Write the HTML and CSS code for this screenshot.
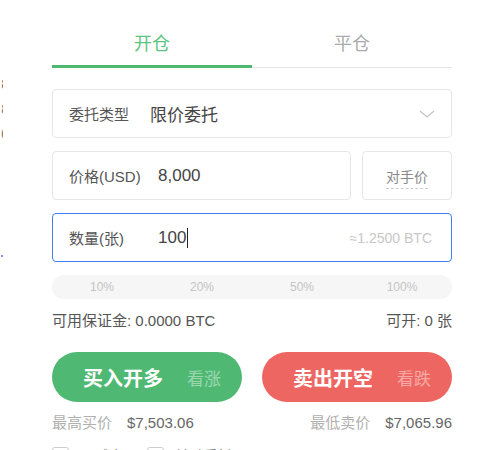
FILE: index.html
```html
<!DOCTYPE html>
<html lang="zh-CN">
<head>
  <meta charset="UTF-8">
  <title>开仓</title>
  <link rel="stylesheet" href="styles.css">
</head>
<body>
  <div class="side">
    <span class="side-txt">8</span>
    <span class="side-txt">8</span>
    <span class="side-txt">0</span>
    <span class="side-dot"></span>
  </div>
  <div class="panel">
    <div class="tabs">
      <div class="tab active">开仓</div>
      <div class="tab">平仓</div>
    </div>

    <div class="field select">
      <span class="label label-short">委托类型</span>
      <span class="value">限价委托</span>
      <svg class="chevron" width="16" height="10" viewBox="0 0 16 10">
        <path d="M1 2 L8 8 L15 2" fill="none" stroke="#c4c4c4" stroke-width="1.2"/>
      </svg>
    </div>

    <div class="price-row">
      <div class="field grow">
        <span class="label">价格(USD)</span>
        <span class="value">8,000</span>
      </div>
      <div class="field counter">
        <span class="counter-txt">对手价</span>
      </div>
    </div>

    <div class="field focus">
      <span class="label">数量(张)</span>
      <span class="value">100<span class="caret"></span></span>
      <span class="approx">≈1.2500 BTC</span>
    </div>

    <div class="percents">
      <span>10%</span>
      <span>20%</span>
      <span>50%</span>
      <span>100%</span>
    </div>

    <div class="avail">
      <span>可用保证金: 0.0000 BTC</span>
      <span>可开: 0 张</span>
    </div>

    <div class="actions">
      <button class="btn buy"><b>买入开多</b><i>看涨</i></button>
      <button class="btn sell"><b>卖出开空</b><i>看跌</i></button>
    </div>

    <div class="quotes">
      <span><em>最高买价</em>$7,503.06</span>
      <span><em>最低卖价</em>$7,065.96</span>
    </div>

    <div class="checks">
      <label class="check"><span class="box"></span>只减仓</label>
      <label class="check"><span class="box"></span>被动委托</label>
    </div>
  </div>
</body>
</html>
```

FILE: styles.css
```css
body {
  margin: 0;
  font-family: "Liberation Sans", "Noto Sans CJK SC", sans-serif;
  color: #444;
  background: #fff;
  display: flex;
  overflow: hidden;
  height: 450px;
}

.side {
  width: 3px;
  overflow: hidden;
  display: flex;
  flex-direction: column;
  align-items: flex-end;
  padding-top: 72px;
  flex-shrink: 0;
}

.side-txt {
  font-size: 14px;
  line-height: 25px;
  color: #777;
  margin-right: -6px;
}

.side-dot {
  width: 2px;
  height: 2px;
  background: #8a8cf0;
  margin-top: 108px;
}

.panel {
  margin-left: 49px;
  width: 400px;
  flex-shrink: 0;
}

.tabs {
  display: flex;
  margin-top: 31px;
  border-bottom: 1px solid #e6e6e6;
}

.tab {
  flex: 1;
  text-align: center;
  font-size: 18px;
  line-height: 26px;
  padding-bottom: 8px;
  color: #aaa;
  border-bottom: 3px solid transparent;
  margin-bottom: -1px;
}

.tab.active {
  color: #5bc47f;
  border-bottom-color: #4cb872;
}

.field {
  height: 47px;
  border: 1px solid #e6e6e6;
  border-radius: 4px;
  display: flex;
  align-items: center;
  padding: 0 16px;
  box-sizing: content-box;
}

.select {
  margin-top: 21px;
}

.label {
  width: 89px;
  font-size: 15px;
  color: #555;
  flex-shrink: 0;
}

.label-short {
  width: 81px;
}

.value {
  font-size: 17px;
  color: #444;
  flex: 1;
  display: flex;
  align-items: center;
}

.price-row {
  display: flex;
  gap: 11px;
  margin-top: 13px;
}

.grow {
  flex: 1;
}

.counter {
  width: 88px;
  padding: 0;
  justify-content: center;
}

.counter-txt {
  font-size: 14px;
  color: #888;
  padding-bottom: 2px;
  margin-top: 3px;
  border-bottom: 1px dashed #ccc;
}

.focus {
  margin-top: 13px;
  border-color: #3d7ef2;
}

.caret {
  width: 1px;
  height: 20px;
  background: #222;
  margin-left: 1px;
}

.approx {
  font-size: 14px;
  color: #c8c8c8;
  margin-right: 3px;
}

.percents {
  margin-top: 13px;
  height: 24px;
  border-radius: 12px;
  background: #f6f6f6;
  display: grid;
  grid-template-columns: repeat(4, 1fr);
  align-items: center;
  text-align: center;
  font-size: 12px;
  color: #c4c4c4;
}

.avail {
  margin-top: 13px;
  display: flex;
  justify-content: space-between;
  font-size: 15px;
  line-height: 17px;
  color: #555;
}

.actions {
  margin-top: 23px;
  display: flex;
  gap: 20px;
}

.btn {
  flex: 1;
  height: 50px;
  border: none;
  border-radius: 25px;
  display: flex;
  align-items: center;
  justify-content: center;
  gap: 24px;
  padding: 0 0 0 10px;
  font-family: "Liberation Serif", "Noto Sans CJK SC", serif;
  cursor: pointer;
}

.btn b {
  font-size: 20px;
  color: #fff;
  font-weight: 700;
}

.btn i {
  font-style: normal;
  font-size: 17px;
  color: rgba(255, 255, 255, 0.45);
}

.buy {
  background: #4fb973;
}

.sell {
  background: #ee6661;
}

.quotes {
  margin-top: 13px;
  display: flex;
  justify-content: space-between;
  font-size: 15px;
  line-height: 16px;
  color: #666;
}

.quotes em {
  font-style: normal;
  color: #b0b0b0;
  margin-right: 15px;
}

.checks {
  margin-top: 14px;
  display: flex;
  gap: 24px;
  font-size: 14px;
  color: #666;
}

.check {
  display: flex;
  align-items: center;
  gap: 12px;
}

.box {
  width: 15px;
  height: 15px;
  border: 1px solid #ccc;
  border-radius: 3px;
}
```
